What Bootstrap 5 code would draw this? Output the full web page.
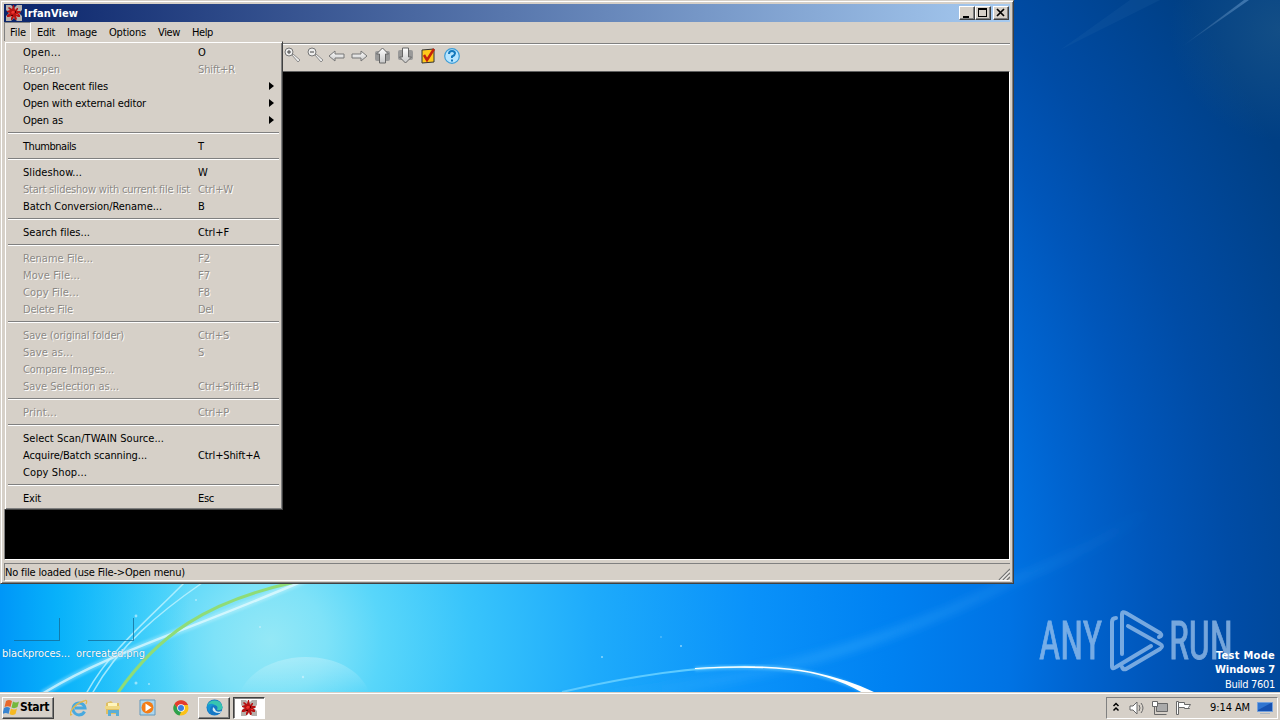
<!DOCTYPE html>
<html lang="en">
<head>
<meta charset="utf-8">
<meta name="viewport" content="width=device-width, initial-scale=1">
<title>IrfanView</title>
<link rel="stylesheet" href="https://cdn.jsdelivr.net/npm/bootstrap@5.3.0/dist/css/bootstrap.min.css">
<style>
  :root { --face:#d6d0c8; --shade:#808080; --ink:#404040; }
  body { font:11px/17px "DejaVu Sans Condensed","DejaVu Sans",sans-serif; font-stretch:condensed; color:#000; background:#0070e0; height:720px; cursor:default; }
  svg { display:block; flex:none; }
  [data-w] { white-space:pre; }
  .desktop { height:692px; }
  .win { left:0; top:0; width:1014px; height:584px; background:var(--face); border:1px solid; border-color:#d6d0c8 #404040 #404040 #d6d0c8; box-shadow:inset 1px 1px #fff, inset -1px -1px #808080; padding:3px; }
  .titlebar { height:18px; background:linear-gradient(90deg,#0a246a,#a6caf0); color:#fff; font-weight:700; padding:0 1px 0 2px; }
  .titletext { padding-left:2px; }
  .raised { background:var(--face); border:1px solid; border-color:#fff #404040 #404040 #fff; box-shadow:inset -1px -1px #808080; }
  .winbtn { width:16px; height:14px; }
  .closebtn { margin-left:2px; }
  .menubar { height:21px; }
  .menubar > span { padding:0 6px; line-height:21px; }
  .menubar > .opened { border:1px solid; border-color:#808080 #fff #fff #808080; padding:1px 4px 0 5px; height:20px; line-height:18px; width:27px; }
  .tools { height:28px; border-top:1px solid #808080; box-shadow:inset 0 1px #fff; padding-left:279px; padding-bottom:4px; }
  .canvas { height:489px; background:#000; border:1px solid; border-color:#606060 #fff #fff #808080; }
  .status { margin-top:3px; height:18px; border-top:1px solid #808080; border-left:1px solid #808080; border-bottom:1px solid #fff; position:relative; line-height:18px; }
  .filemenu { left:4px; top:41px; width:279px; height:469px; background:var(--face); border:1px solid; border-color:#d6d0c8 #404040 #404040 #d6d0c8; box-shadow:inset 1px 1px #fff, inset -1px -1px #808080; padding:2px; z-index:3; }
  .entry { height:17px; padding-left:16px; padding-right:6px; }
  .entry .cmd { width:175px; }
  .entry svg { margin-top:-2px; }
  .entry.off { color:#8c8985; text-shadow:1px 1px #fff; }
  .rule { height:9px; padding:3px 1px 0; }
  .rule::before { content:""; display:block; height:2px; border-top:1px solid #808080; border-bottom:1px solid #fff; }
  .shortcut { width:74px; color:#fff; text-shadow:0 0 1px #0a6aa0; }
  .shortcut .ghost { width:46px; height:23px; border:solid #146994; border-width:0 1px 1px 0; opacity:.75; margin-left:14px; }
  .files { left:0; top:618px; }
  .files .caption { padding-left:2px; margin-top:4px; }
  .build { right:5px; top:649px; color:#fff; line-height:14px; text-align:right; }
  .build .number { padding-top:1px; }
  .taskbar { height:28px; background:var(--face); border-top:1px solid #d6d0c8; box-shadow:inset 0 1px #fff; padding:3px 2px 1px; }
  .startbtn { width:52px; height:22px; font-weight:700; font-size:12px; padding-left:0; }
  .launch { margin-left:8px; }
  .slot { width:34px; height:22px; }
  .task { width:32px; height:22px; }
  .active-task { background:#fff; border:1px solid; border-color:#404040 #fff #fff #404040; box-shadow:inset 1px 1px #808080; margin-left:3px; }
  .tray { width:172px; height:22px; border:1px solid; border-color:#808080 #fff #fff #808080; padding-left:5px; }
  .clock { margin-left:6px; }
</style>
</head>
<body class="overflow-hidden">
<svg width="0" height="0" class="position-absolute">
  <defs>
    <symbol id="splat" viewBox="0 0 16 16">
      <path fill="#b5afaa" d="M0 0h5l3 3 3-3h5v5l-3 3 3 3v5h-5l-3-3-3 3H0v-5l3-3-3-3z"/>
      <path fill="#b81212" d="M7 0h1l1 5 2-2h1v1l-1 2h3l1 1-1 1h-2l2 2v2h-2l-2-1 1 3-1 1H9l-1-3-2 3H5v-2l1-2-3 1H1v-2l3-2-3-1V6l3-1-2-2 1-1 3 2z"/>
      <path fill="#ee3530" d="M6 6h2l1 1-2 2-2-1zM10 9h2v1h-2z"/>
      <path fill="#500" d="M9 6h1v2H9zM5 10h2v1H5z"/>
    </symbol>
    <linearGradient id="metal" x2="0" y2="1"><stop stop-color="#fff"/><stop offset="1" stop-color="#c8c8c8"/></linearGradient>
  </defs>
</svg>

<main class="desktop position-relative overflow-hidden">
  <svg width="1280" height="692" viewBox="0 0 1280 692">
    <defs>
      <radialGradient id="sky" gradientUnits="userSpaceOnUse" cx="270" cy="640" r="1120">
        <stop offset="0" stop-color="#94e8f6"/><stop offset=".05" stop-color="#7ee2f8"/><stop offset=".1" stop-color="#58d6fa"/><stop offset=".18" stop-color="#38c4fb"/><stop offset=".29" stop-color="#1eabfb"/><stop offset=".43" stop-color="#0a92fa"/><stop offset=".55" stop-color="#0082f2"/><stop offset=".66" stop-color="#0073e4"/><stop offset=".72" stop-color="#0064d0"/><stop offset=".79" stop-color="#0056ba"/><stop offset=".86" stop-color="#004ca6"/><stop offset="1" stop-color="#003f84"/>
      </radialGradient>
      <linearGradient id="leftedge"><stop stop-color="#0096f8"/><stop offset=".3" stop-color="#00aefa" stop-opacity=".85"/><stop offset="1" stop-color="#10c8fa" stop-opacity="0"/></linearGradient>
      <radialGradient id="corner" gradientUnits="userSpaceOnUse" cx="1280" cy="30" r="110"><stop stop-color="#2a6088" stop-opacity=".45"/><stop offset="1" stop-color="#2a6088" stop-opacity="0"/></radialGradient>
      <linearGradient id="orb" x2="0" y2="1"><stop stop-color="#fff" stop-opacity=".25"/><stop offset="1" stop-color="#fff" stop-opacity="0"/></linearGradient>
      <linearGradient id="ray"><stop stop-color="#fff" stop-opacity="0"/><stop offset="1" stop-color="#9cf" stop-opacity=".35"/></linearGradient>
      <linearGradient id="beam" gradientUnits="userSpaceOnUse" x1="540" x2="1150"><stop stop-color="#4bb8ff" stop-opacity="0"/><stop offset=".5" stop-color="#4bb8ff" stop-opacity=".35"/><stop offset="1" stop-color="#4bb8ff" stop-opacity="0"/></linearGradient>
      <filter id="soft"><feGaussianBlur stdDeviation="1"/></filter>
      <filter id="softer"><feGaussianBlur stdDeviation="4"/></filter>
    </defs>
    <rect width="1280" height="692" fill="url(#sky)"/>
    <rect y="560" width="190" height="132" fill="url(#leftedge)"/>
    <rect x="1100" width="180" height="160" fill="url(#corner)"/>
    <path d="M1180 48L1244 0h5z" fill="url(#ray)"/>
    <path d="M1060 50L1130 0h30z" fill="#3b78b8" opacity=".12"/>
    <path d="M540 700Q800 690 1014 580Q1090 550 1150 510" fill="none" stroke="url(#beam)" stroke-width="9" filter="url(#softer)"/>
    <g fill="none">
      <path d="M240 692c20-45 110-48 129 0z" fill="url(#orb)"/>
      <path d="M42 694C110 652 180 634 310 578" stroke="#dffaff" stroke-width="7" opacity=".3" filter="url(#soft)"/>
      <path d="M42 694C110 652 180 634 310 578" stroke="#e8fcff" stroke-width="2.500" opacity=".7"/>
      <path d="M86 694C110 650 150 618 184 583M92 694C118 646 160 612 202 583" stroke="#c8f6ff" stroke-width="1.500" opacity=".75"/>
      <path d="M117 694C158 635 205 602 295 582" stroke="#8fdc77" stroke-width="3"/>
      <path d="M474 692Q600 664 755 667" stroke="none"/>
      <path d="M562 692Q680 665 755 667" stroke="#5ecbff" stroke-width="2"/>
      <path d="M695 669Q760 664 800 671Q840 678 870 694" stroke="#7fd9ff" stroke-width="5" opacity=".4" filter="url(#soft)"/>
      <path d="M695 668Q770 663 813 672Q850 680 876 693L863 693Q830 674 790 670Q750 666 695 669z" fill="#fff"/>
    </g>
    <g fill="#d8f6ff" opacity=".6"><circle cx="136" cy="616" r="1.4"/><circle cx="196" cy="600" r="1"/><circle cx="136" cy="683" r="1.5"/><circle cx="149" cy="684" r="1"/><circle cx="260" cy="627" r="1"/><circle cx="303" cy="677" r="1.2"/><circle cx="602" cy="657" r="1"/><circle cx="681" cy="646" r="1"/><circle cx="661" cy="637" r=".7"/></g>
    <g fill="#a9cbef" stroke="#a9cbef" opacity=".7" font-family="Roboto, sans-serif" font-size="53">
      <text x="1039" y="659" textLength="63" lengthAdjust="spacingAndGlyphs" stroke-width=".9">ANY</text>
      <text x="1169" y="659" textLength="64" lengthAdjust="spacingAndGlyphs" stroke-width=".9">RUN</text>
      <g fill="none" stroke-width="4" stroke-linecap="round" stroke-linejoin="round">
        <path d="M1116 618Q1112 618 1112 622V666Q1112 670 1116 667L1151 646"/>
        <path d="M1122 654V614Q1122 611 1126 613L1160 633Q1163 636 1159 637"/>
        <path d="M1128 626L1160 644Q1164 646 1160 649L1126 669Q1123 670 1122 667"/>
      </g>
    </g>
  </svg>

  <div class="files d-flex position-absolute">
    <div class="shortcut"><div class="ghost"></div><div class="caption"><span data-w="68">blackproces...</span></div></div>
    <div class="shortcut"><div class="ghost"></div><div class="caption"><span data-w="69">orcreated.png</span></div></div>
  </div>
  <div class="build position-absolute"><b data-w="59">Test Mode</b><br><b data-w="60">Windows 7</b><div class="number"><span data-w="50">Build 7601</span></div></div>

  <section class="win position-absolute">
    <header class="titlebar d-flex align-items-center">
      <svg width="16" height="16"><use href="#splat"/></svg>
      <span class="titletext me-auto"><span data-w="54">IrfanView</span></span>
      <span class="raised winbtn"><svg width="14" height="12"><path d="M3 9h6v2H3z"/></svg></span>
      <span class="raised winbtn"><svg width="14" height="12"><path fill-rule="evenodd" d="M2 1h9v9H2zM3 3v6h7V3z"/></svg></span>
      <span class="raised winbtn closebtn"><svg width="14" height="12"><path d="M3 2l7 7M10 2L3 9" stroke="#000" stroke-width="1.700"/></svg></span>
    </header>
    <nav class="menubar d-flex">
      <span class="opened"><span data-w="16">File</span></span><span><span data-w="18">Edit</span></span><span><span data-w="30">Image</span></span><span><span data-w="37">Options</span></span><span><span data-w="22">View</span></span><span><span data-w="21">Help</span></span>
    </nav>
    <div class="tools d-flex align-items-center">
      <svg width="180" height="20">
        <g fill="#eee" stroke="#777">
          <path d="M9 9l6 7 2-2-7-6z" stroke-width=".8"/><circle cx="6" cy="6" r="4"/><path d="M4 6h4M6 4v4" stroke="#444"/>
          <path d="M32 9l6 7 2-2-7-6z" stroke-width=".8"/><circle cx="29" cy="6" r="4"/><path d="M27 6h4" stroke="#444"/>
          <path fill="url(#metal)" d="M46 10l6-5v3h9v4h-9v3zM84 10l-6-5v3h-9v4h9v3z"/>
        </g>
        <rect x="92" y="5" width="15" height="10" rx="2" fill="#999"/><path d="M99.500 2l6 6h-3v9h-6V8h-3z" fill="url(#metal)" stroke="#666"/>
        <rect x="115" y="4" width="15" height="10" rx="2" fill="#999"/><path d="M122.500 17l6-6h-3V2h-6v9h-3z" fill="url(#metal)" stroke="#666"/>
        <path d="M139 4l12-1v13l-12 1z" fill="#ffc91b" stroke="#333"/><path d="M141 9l3 5 7-11" fill="none" stroke="#c4220c" stroke-width="2.500"/>
        <circle cx="169" cy="10" r="7.300" fill="#b8e5ff" stroke="#3b9cd6" stroke-width="1.200"/><path d="M166 8q0-3 3-3t3 2.500q0 1.500-3 3v1.500M169 13.500v2" fill="none" stroke="#1479bd" stroke-width="2"/>
      </svg>
    </div>
    <div class="canvas"></div>
    <footer class="status"><span data-w="180">No file loaded (use File-&gt;Open menu)</span>
      <svg class="position-absolute end-0 bottom-0" width="12" height="12"><path d="M1 12L12 1M5 12l7-7M9 12l3-3" stroke="#777" stroke-width="1.300"/><path d="M2.500 12L12 2.500M6.500 12L12 6.500" stroke="#fff"/></svg>
    </footer>
  </section>
  <div id="fileMenu" class="filemenu position-absolute"></div>
</main>

<footer class="taskbar d-flex align-items-center">
  <button class="raised startbtn d-flex align-items-center text-black">
    <svg width="17" height="17" viewBox="0 0 17 17"><path d="M3 2q3-2 6 0L7.500 8Q5 6.500 1.500 8z" fill="#e8682a"/><path d="M10 2.500q3 2 6 0L14.500 8q-3 2-6 .5z" fill="#75b83c"/><path d="M1 9q3-2 6 0l-1.500 6Q3 13-.5 15z" fill="#3984cf"/><path d="M8 9.500q3 2 6 0L12.500 15q-3 2-6 0z" fill="#f6b921"/></svg>
    <span data-w="29">Start</span>
  </button>
  <div class="launch d-flex align-items-center">
    <div class="slot d-flex align-items-center justify-content-center"><svg width="18" height="18"><path d="M14.500 12.500A6 6 0 1 1 15 9H5" fill="none" stroke="#48a9df" stroke-width="3"/><path d="M2 15Q-1 18 1 12Q6 4 14 2Q18 0 16 5" fill="none" stroke="#e5b84b" stroke-width="1.300"/></svg></div>
    <div class="slot d-flex align-items-center justify-content-center"><svg width="16" height="16"><path d="M1 3l5-2 2 2h6v11H1z" fill="#e0bf62"/><path d="M3 3h9v5H3z" fill="#fff5bc"/><path d="M0 6h15v3H0z" fill="#f0d985"/><path d="M3 16v-6h11v6h-3v-3H6v3z" fill="#5aaed6"/></svg></div>
    <div class="slot d-flex align-items-center justify-content-center"><svg width="17" height="17"><path d="M1 1h15v15H1z" fill="#add6ed" stroke="#6499bc"/><circle cx="8.500" cy="8.500" r="6" fill="#f47d16"/><path d="M6.500 4.500v8l6-4z" fill="#fff"/></svg></div>
    <div class="slot d-flex align-items-center justify-content-center"><svg width="16" height="16"><circle cx="8" cy="8" r="7.500" fill="#fbc116"/><path d="M1.500 4A7.500 7.500 0 0 1 14.500 4L15 5H8L5 10z" fill="#e43b2e"/><path d="M1.500 4l4 6 3 1-2 4.500A7.500 7.500 0 0 1 1.500 4z" fill="#2da14d"/><circle cx="8" cy="8" r="3.800" fill="#fff"/><circle cx="8" cy="8" r="3" fill="#3c7de0"/></svg></div>
    <div class="raised task d-flex align-items-center justify-content-center"><svg width="17" height="17"><circle cx="8.500" cy="8.500" r="8" fill="#1678c6"/><path d="M1 7A8 8 0 0 1 16.500 8Q16 12 11 11Q13 6 7 6Q3 5 1 7z" fill="#37c5b0"/><path d="M7 8Q5 14 14 14L16 12Q10 14 9 10z" fill="#d3eaf3"/><path d="M1 7q3-4 8-1-6 0-5 8-3-3-3-7z" fill="#1695d5"/></svg></div>
    <div class="active-task task d-flex align-items-center justify-content-center"><svg width="16" height="16"><use href="#splat"/></svg></div>
  </div>
  <div class="tray d-flex align-items-center ms-auto">
    <svg width="92" height="20"><path d="M1.500 8l2.500-2.500L6.500 8M1.500 12.500L4 10l2.500 2.500" fill="none" stroke="#000" stroke-width="1.500"/>
      <g fill="#fff" stroke="#686868"><path d="M18 8h3l4-4v12l-4-4h-3z"/><path d="M27 7q2 3 0 6M29 5q4 5 0 10" fill="none"/>
      <path d="M44.500 5.500h11v8h-11z" fill="#aaa"/><path d="M40.500 3.500h5v5h-5z"/><path d="M42.500 9v7.500h12M46 16.500h8" fill="none"/><path d="M64.500 3.500h2v13h-2z"/><path d="M66.500 4.500h6v2h6l-2 3 1 1h-5v-1h-6z"/></g></svg>
    <span class="clock" data-w="40">9:14 AM</span>
    <svg class="ms-auto me-1" width="16" height="16"><path d="M.5 2.500h15v9H.5z" fill="#1551b1" stroke="#73a0dc"/><path d="M1 3h13L1 10z" fill="#2f74d0"/><path d="M3 13h10v1H3z" fill="#a8b6c4"/></svg>
  </div>
</footer>

<script src="https://cdn.jsdelivr.net/npm/bootstrap@5.3.0/dist/js/bootstrap.bundle.min.js"></script>
<script>
  // label, label width, shortcut, shortcut width, flags (d = disabled, s = submenu)
  const entries = [
    ["Open...",38,"O",8],["Reopen",37,"Shift+R",37,"d"],["Open Recent files",85,"",0,"s"],["Open with external editor",123,"",0,"s"],["Open as",40,"",0,"s"],0,
    ["Thumbnails",53,"T",6],0,
    ["Slideshow...",59,"W",10],["Start slideshow with current file list",167,"Ctrl+W",35,"d"],["Batch Conversion/Rename...",139,"B",6],0,
    ["Search files...",67,"Ctrl+F",31],0,
    ["Rename File...",70,"F2",12,"d"],["Move File...",57,"F7",12,"d"],["Copy File...",56,"F8",12,"d"],["Delete File",50,"Del",15,"d"],0,
    ["Save (original folder)",101,"Ctrl+S",31,"d"],["Save as...",50,"S",6,"d"],["Compare Images...",91,"",0,"d"],["Save Selection as...",96,"Ctrl+Shift+B",61,"d"],0,
    ["Print...",34,"Ctrl+P",31,"d"],0,
    ["Select Scan/TWAIN Source...",141,"",0],["Acquire/Batch scanning...",124,"Ctrl+Shift+A",62],["Copy Shop...",64,"",0],0,
    ["Exit",18,"Esc",16]
  ];
  document.getElementById("fileMenu").innerHTML = entries.map(e => !e ? '<div class="rule"></div>' :
    `<div class="entry d-flex align-items-center${e[4]==="d"?" off":""}"><span class="cmd"><span data-w="${e[1]}">${e[0]}</span></span>${e[2]?`<span data-w="${e[3]}">${e[2]}</span>`:""}${e[4]==="s"?'<svg class="ms-auto" width="5" height="8"><path d="M0 0l5 4-5 4z"/></svg>':""}</div>`).join("");
  // Tracking for each label, computed from its nominal width
  document.querySelectorAll("[data-w]").forEach(el => {
    const n = el.textContent.length;
    if (n > 1) el.style.letterSpacing = ((+el.dataset.w - el.getBoundingClientRect().width) / n) + "px";
  });
</script>
</body>
</html>
